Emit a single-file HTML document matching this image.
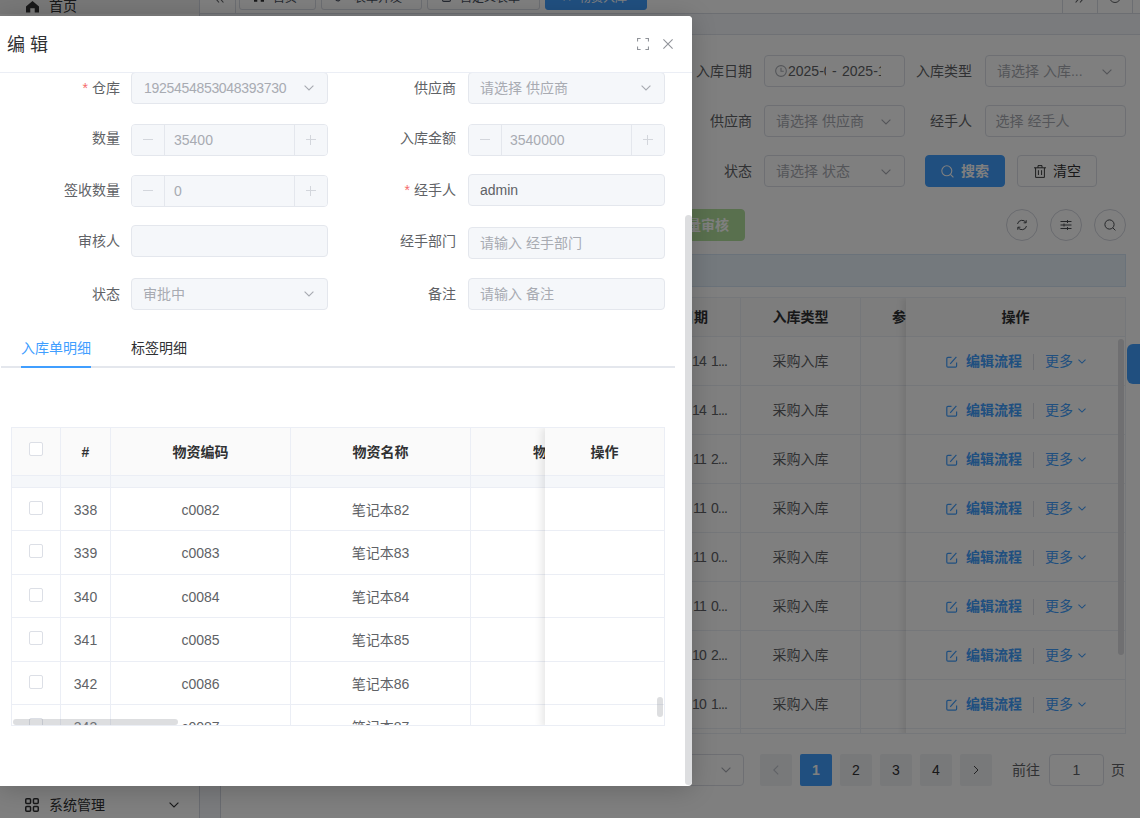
<!DOCTYPE html>
<html lang="zh-CN">
<head>
<meta charset="utf-8">
<title>编辑</title>
<style>
*{box-sizing:border-box;margin:0;padding:0}
html,body{width:1140px;height:818px;overflow:hidden}
body{position:relative;background:#f0f2f5;font-family:"Liberation Sans","Noto Sans CJK SC",sans-serif;font-size:14px;color:#606266}
.abs{position:absolute}
#app{position:absolute;left:0;top:0;width:1140px;height:818px;overflow:hidden;background:#f5f7fa}
#mask{position:absolute;left:0;top:0;width:1140px;height:818px;background:rgba(0,0,0,.5)}
/* sidebar */
#side{position:absolute;left:0;top:0;width:200px;height:818px;background:#fff;border-right:1px solid #d2d6e0}
#side .it{position:absolute;left:0;width:199px;height:40px;color:#303133;font-size:14px;line-height:40px}
#side .it span{position:absolute;left:49px;top:0;white-space:nowrap}
/* tagbar */
#tags{position:absolute;left:200px;top:0;width:940px;height:14px;background:#fff;border-bottom:1px solid #d8dce5;overflow:hidden}
.tag{position:absolute;top:-16px;height:26px;border:1px solid #d8dce5;border-radius:3px;background:#fff;color:#495060;font-size:12px;line-height:27px;text-align:left;white-space:nowrap}
.tag.on{background:#409eff;border-color:#409eff;color:#fff}
.vsep{position:absolute;top:0;width:1px;height:13px;background:#d8dce5}
/* card */
#card{position:absolute;left:220px;top:34px;width:940px;height:800px;background:#fff;border-top:1px solid #dfe3ea;border-left:1px solid #d2d6e0}
.flabel{position:absolute;height:32px;line-height:32px;color:#606266;font-size:14px;text-align:right;white-space:nowrap}
.inp{position:absolute;height:32px;border:1px solid #dcdfe6;border-radius:4px;background:#fff;font-size:14px;line-height:30px;color:#a8abb2;padding-left:11px;white-space:nowrap;overflow:hidden}
.chev{position:absolute;width:10px;height:6px}
.btn{position:absolute;height:32px;border-radius:4px;font-size:14px;line-height:30px;white-space:nowrap;font-weight:bold}
.circ{position:absolute;top:175px;width:32px;height:32px;border:1px solid #d3d6de;border-radius:50%;background:#fff}
.circ svg{position:absolute;left:9px;top:9px;width:12px;height:12px}
/* bg table */
#bt{position:absolute;left:0;top:263px;width:906px;height:436px;border:1px solid #ebeef5;overflow:hidden;background:#fff}
.bh{position:absolute;top:0;height:39px;background:#fafafa;border-bottom:1px solid #ebeef5;border-right:1px solid #ebeef5;color:#303133;font-weight:bold;text-align:center;line-height:39px;white-space:nowrap;overflow:hidden}
.bc{position:absolute;height:49px;border-bottom:1px solid #ebeef5;border-right:1px solid #ebeef5;text-align:center;line-height:48px;white-space:nowrap;overflow:hidden;color:#606266}
.lnk{color:#409eff}
.pg{position:absolute;top:720px;width:32px;height:32px;border-radius:2px;background:#f0f2f5;color:#303133;font-size:14px;text-align:center;line-height:33px}
.pg.on{background:#409eff;color:#fff;font-weight:bold}
/* modal */
#dlg{position:absolute;left:0;top:16px;width:692px;height:770px;background:#fff;border-radius:0 4px 4px 0;box-shadow:0 3px 26px rgba(0,0,0,.2);overflow:hidden}
#dh{position:absolute;left:0;top:0;width:692px;height:57px;border-bottom:1px solid #ebeef5;background:#fff;z-index:5}
#dh h3{position:absolute;left:7px;top:17px;font-size:18px;font-weight:normal;color:#303133;line-height:24px;white-space:nowrap}
#db{position:absolute;left:0;top:57px;width:692px;height:713px;overflow:hidden}
.ml{position:absolute;width:120px;height:32px;line-height:32px;text-align:right;color:#606266;font-size:14px;white-space:nowrap}
.ml i{color:#f56c6c;font-style:normal;margin-right:4px}
.mi{position:absolute;width:197px;height:32px;border:1px solid #e4e7ed;border-radius:4px;background:#f5f7fa;color:#a8abb2;font-size:14px;line-height:30px;padding-left:11px;white-space:nowrap;overflow:hidden}
.mi .seg{position:absolute;top:0;width:33px;height:30px;background:#f5f7fa;color:#d0d3d9}
.mi .seg.l{left:0;border-right:1px solid #e4e7ed}
.mi .seg.r{right:0;border-left:1px solid #e4e7ed}
.mi .seg b{position:absolute;left:11px;top:14px;width:10px;height:1px;background:#d3d6dc}
.mi .seg.r em{position:absolute;left:15px;top:10px;width:1px;height:10px;background:#d3d6dc}
/* inner table */
#mt{position:absolute;left:11px;top:411px;width:654px;height:299px;border:1px solid #ebeef5;overflow:hidden;background:#fff}
.th{position:absolute;top:0;z-index:2;height:48px;background:#fafafa;border-bottom:1px solid #ebeef5;border-right:1px solid #ebeef5;color:#303133;font-weight:bold;text-align:center;line-height:48px;white-space:nowrap;overflow:hidden;font-size:14px}
.td{position:absolute;height:43.5px;border-bottom:1px solid #ebeef5;border-right:1px solid #ebeef5;text-align:center;line-height:44px;white-space:nowrap;overflow:hidden;color:#606266;font-size:14px}
.cb{position:absolute;width:14px;height:14px;border:1px solid #dcdfe6;border-radius:2px;background:#fff}
.dr{position:absolute;top:0;height:30px;overflow:hidden;white-space:nowrap;color:#606266}
</style>
</head>
<body>
<div id="app">
  <div id="side">
    <div class="it" style="top:-26px;background:#f0f0f0">
      <svg class="abs" style="left:26px;top:27.3px" width="13" height="11.5" viewBox="0 0 14 13" preserveAspectRatio="none"><path d="M7 0 L0 6.2 V13 H4.6 V8.2 H9.4 V13 H14 V6.2 Z" fill="#303133"/></svg>
      <span style="top:12px">首页</span>
    </div>
    <div class="it" style="top:785px">
      <svg class="abs" style="left:25px;top:13px" width="14" height="14" viewBox="0 0 14 14" fill="none" stroke="#303133" stroke-width="1.5"><rect x=".75" y=".75" width="4.8" height="4.8" rx="1"/><rect x="8.45" y=".75" width="4.8" height="4.8" rx="1"/><rect x=".75" y="8.45" width="4.8" height="4.8" rx="1"/><rect x="8.45" y="8.45" width="4.8" height="4.8" rx="1"/></svg>
      <span>系统管理</span>
      <svg class="abs" style="left:169px;top:17px" width="10" height="6" viewBox="0 0 10 6" fill="none" stroke="#303133" stroke-width="1.1"><path d="M.6 .6 L5 5 L9.4 .6"/></svg>
    </div>
  </div>
  <div id="tags">
    <svg class="abs" style="left:15px;top:-6px" width="9" height="9" viewBox="0 0 9 9" fill="none" stroke="#606266" stroke-width="1.1"><path d="M4 .5 L.6 4.5 L4 8.5 M8.4 .5 L5 4.5 L8.4 8.5"/></svg>
    <div class="vsep" style="left:35px"></div>
    <div class="tag" style="left:39px;width:77px;padding-left:33px"><svg class="abs" style="left:14px;top:7px" width="10" height="10" viewBox="0 0 14 13"><path d="M7 0 L0 6.2 V13 H4.6 V8.2 H9.4 V13 H14 V6.2 Z" fill="#303133"/></svg>首页</div>
    <div class="tag" style="left:121px;width:101px;padding-left:32px"><svg class="abs" style="left:13px;top:7px" width="10" height="10" viewBox="0 0 10 10" fill="none" stroke="#495060" stroke-width="1.2"><path d="M3.5 3 L.8 5.6 Q.2 9 3.6 9 L6 6.8 M6.5 7 L9.2 4.4 Q9.8 1 6.4 1 L4 3.2"/></svg>表单开发</div>
    <div class="tag" style="left:227px;width:113px;padding-left:32px"><svg class="abs" style="left:14px;top:7px" width="9" height="10" viewBox="0 0 9 10" fill="none" stroke="#495060" stroke-width="1.2"><rect x=".6" y="1.6" width="7.8" height="7.8" rx="1.2"/><path d="M2.5 .2 V2.6 M6.5 .2 V2.6"/></svg>自定义表单</div>
    <div class="tag on" style="left:345px;width:102px;padding-left:33px"><svg class="abs" style="left:17px;top:7px" width="8" height="9" viewBox="0 0 8 9" fill="#fff"><circle cx="1.2" cy="1.2" r="1"/><circle cx="6.8" cy="1.2" r="1"/><circle cx="1.2" cy="7.6" r=".9"/><circle cx="6.8" cy="7.6" r=".9"/></svg>物资入库</div>
    <div class="vsep" style="left:862px"></div>
    <svg class="abs" style="left:875px;top:-6px" width="9" height="9" viewBox="0 0 9 9" fill="none" stroke="#606266" stroke-width="1.1"><path d="M.6 .5 L4 4.5 L.6 8.5 M5 .5 L8.4 4.5 L5 8.5"/></svg>
    <div class="vsep" style="left:897px"></div>
    <div class="abs" style="left:909px;top:-9px;width:12px;height:12px;border:1.2px solid #606266;border-radius:50%"></div>
    <div class="vsep" style="left:932px"></div>
  </div>
  <div id="card">
<div class="flabel" style="left:431px;top:20px;width:100px">入库日期</div>
<div class="inp" style="left:543px;top:20px;width:141px;color:#606266;padding-left:10px"><svg class="abs" style="left:10px;top:9px" width="12" height="12" viewBox="0 0 11 11" fill="none" stroke="#a8abb2" stroke-width="1"><circle cx="5.5" cy="5.5" r="4.9"/><path d="M5.5 2.6 V5.8 H8"/></svg><span class="dr" style="left:23px;width:38px">2025-07-01</span><span class="abs" style="left:67px;top:0">-</span><span class="dr" style="left:77px;width:38.5px">2025-12-31</span></div>
<div class="flabel" style="left:651px;top:20px;width:100px">入库类型</div>
<div class="inp" style="left:764px;top:20px;width:141px">请选择 入库...<svg class="abs" style="left:116px;top:12.5px" width="10" height="6" viewBox="0 0 10 6" fill="none" stroke="#a8abb2" stroke-width="1.1"><path d="M.6 .6 L5 5 L9.4 .6"/></svg></div>
<div class="flabel" style="left:431px;top:70px;width:100px">供应商</div>
<div class="inp" style="left:543px;top:70px;width:141px">请选择 供应商<svg class="abs" style="left:116px;top:12.5px" width="10" height="6" viewBox="0 0 10 6" fill="none" stroke="#a8abb2" stroke-width="1.1"><path d="M.6 .6 L5 5 L9.4 .6"/></svg></div>
<div class="flabel" style="left:651px;top:70px;width:100px">经手人</div>
<div class="inp" style="left:764px;top:70px;width:141px;padding-left:9.5px">选择 经手人</div>
<div class="flabel" style="left:431px;top:120px;width:100px">状态</div>
<div class="inp" style="left:543px;top:120px;width:141px">请选择 状态<svg class="abs" style="left:116px;top:12.5px" width="10" height="6" viewBox="0 0 10 6" fill="none" stroke="#a8abb2" stroke-width="1.1"><path d="M.6 .6 L5 5 L9.4 .6"/></svg></div>
<div class="btn" style="left:704px;top:120px;width:80px;background:#409eff;border:1px solid #409eff;color:#fff;padding-left:35px"><svg class="abs" style="left:15px;top:9px" width="13" height="13" viewBox="0 0 13 13" fill="none" stroke="#fff" stroke-width="1.1"><circle cx="5.8" cy="5.8" r="5"/><path d="M9.4 9.4 L12.4 12.4"/></svg>搜索</div>
<div class="btn" style="left:796px;top:120px;width:80px;background:#fff;border:1px solid #dcdfe6;color:#303133;padding-left:35px;font-weight:normal"><svg class="abs" style="left:16px;top:9px" width="12" height="13" viewBox="0 0 12 13" fill="none" stroke="#303133" stroke-width=".95"><path d="M0 2.8 H12 M4 2.8 V.6 H8 V2.8 M1.6 2.8 V12.4 H10.4 V2.8 M4.4 5.2 V10 M7.6 5.2 V10"/></svg>清空</div>
<div class="btn" style="left:404px;top:174px;width:120px;background:#b3e19d;border:1px solid #b3e19d;color:#fff;text-align:right;padding-right:15px">批量审核</div>
<div class="circ" style="left:785px;top:174px"><svg viewBox="0 0 12 12" fill="none" stroke="#4a4d52" stroke-width="1"><path d="M1.5 5 A4.6 4.6 0 0 1 10 3.6 M10.2 1.2 V3.8 H7.6 M10.5 7 A4.6 4.6 0 0 1 2 8.4 M1.8 10.8 V8.2 H4.4"/></svg></div>
<div class="circ" style="left:829px;top:174px"><svg viewBox="0 0 12 12" fill="none" stroke="#4a4d52" stroke-width="1"><path d="M0.5 2.5 H11.5 M0.5 6 H11.5 M0.5 9.5 H11.5 M7.5 1 V4 M4 4.5 V7.5 M7.5 8 V11"/></svg></div>
<div class="circ" style="left:873px;top:174px"><svg viewBox="0 0 12 12" fill="none" stroke="#4a4d52" stroke-width="1"><circle cx="5.5" cy="5.5" r="4.6"/><path d="M8.8 8.8 L11.4 11.4"/></svg></div>
<div class="abs" style="left:379px;top:219px;width:526px;height:33px;background:#e9f2fb;border:1px solid #d4e4f5"></div>
<div id="bt" style="left:379px;top:262px;width:526px;height:437px">
<div class="bh" style="left:0px;width:140px;text-align:right;padding-right:32px;">入库日期</div>
<div class="bh" style="left:140px;width:120px;">入库类型</div>
<div class="bh" style="left:260px;width:120px;text-align:left;padding-left:31px;">参考单号</div>
<div class="bc" style="left:0px;top:39px;width:140px;text-align:right;padding-right:13px;letter-spacing:-.85px;word-spacing:2px"><span style="margin-right:2px">2025-07-</span>14 1...</div>
<div class="bc" style="left:140px;top:39px;width:120px">采购入库</div>
<div class="bc" style="left:260px;top:39px;width:120px"></div>
<div class="bc" style="left:0px;top:88px;width:140px;text-align:right;padding-right:13px;letter-spacing:-.85px;word-spacing:2px"><span style="margin-right:2px">2025-07-</span>14 1...</div>
<div class="bc" style="left:140px;top:88px;width:120px">采购入库</div>
<div class="bc" style="left:260px;top:88px;width:120px"></div>
<div class="bc" style="left:0px;top:137px;width:140px;text-align:right;padding-right:13px;letter-spacing:-.85px;word-spacing:2px"><span style="margin-right:2px">2025-07-</span>11 2...</div>
<div class="bc" style="left:140px;top:137px;width:120px">采购入库</div>
<div class="bc" style="left:260px;top:137px;width:120px"></div>
<div class="bc" style="left:0px;top:186px;width:140px;text-align:right;padding-right:13px;letter-spacing:-.85px;word-spacing:2px"><span style="margin-right:2px">2025-07-</span>11 0...</div>
<div class="bc" style="left:140px;top:186px;width:120px">采购入库</div>
<div class="bc" style="left:260px;top:186px;width:120px"></div>
<div class="bc" style="left:0px;top:235px;width:140px;text-align:right;padding-right:13px;letter-spacing:-.85px;word-spacing:2px"><span style="margin-right:2px">2025-07-</span>11 0...</div>
<div class="bc" style="left:140px;top:235px;width:120px">采购入库</div>
<div class="bc" style="left:260px;top:235px;width:120px"></div>
<div class="bc" style="left:0px;top:284px;width:140px;text-align:right;padding-right:13px;letter-spacing:-.85px;word-spacing:2px"><span style="margin-right:2px">2025-07-</span>11 0...</div>
<div class="bc" style="left:140px;top:284px;width:120px">采购入库</div>
<div class="bc" style="left:260px;top:284px;width:120px"></div>
<div class="bc" style="left:0px;top:333px;width:140px;text-align:right;padding-right:13px;letter-spacing:-.85px;word-spacing:2px"><span style="margin-right:2px">2025-07-</span>10 2...</div>
<div class="bc" style="left:140px;top:333px;width:120px">采购入库</div>
<div class="bc" style="left:260px;top:333px;width:120px"></div>
<div class="bc" style="left:0px;top:382px;width:140px;text-align:right;padding-right:13px;letter-spacing:-.85px;word-spacing:2px"><span style="margin-right:2px">2025-07-</span>10 1...</div>
<div class="bc" style="left:140px;top:382px;width:120px">采购入库</div>
<div class="bc" style="left:260px;top:382px;width:120px"></div>
<div class="bc" style="left:0px;top:431px;width:140px;text-align:right;padding-right:13px;letter-spacing:-.85px;word-spacing:2px"><span style="margin-right:2px">2025-07-</span>10 1...</div>
<div class="bc" style="left:140px;top:431px;width:120px">采购入库</div>
<div class="bc" style="left:260px;top:431px;width:120px"></div>
<div class="abs" style="left:305px;top:0;width:219px;height:440px;background:#fff;box-shadow:-2px 0 8px rgba(0,0,0,.12)">
<div class="bh" style="left:0;width:219px;border-right:0">操作</div>
<div class="bc" style="left:0;top:39px;width:219px;border-right:0"><svg class="abs" style="left:40px;top:19px" width="12" height="12" viewBox="0 0 12 12" fill="none" stroke="#409eff" stroke-width="1.2"><path d="M5.5 1.4 H2 Q.8 1.4 .8 2.6 V10 Q.8 11.2 2 11.2 H9.4 Q10.6 11.2 10.6 10 V6.5 M4.2 7.8 L10.4 .9"/></svg><span class="abs lnk" style="left:60px;top:0;font-weight:bold">编辑流程</span><span class="abs" style="left:127px;top:17px;width:1px;height:16px;background:#dcdfe6"></span><span class="abs lnk" style="left:139px;top:0">更多</span><svg class="abs" style="left:172px;top:22px" width="8" height="5" viewBox="0 0 10 6" fill="none" stroke="#409eff" stroke-width="1.3"><path d="M.6 .6 L5 5 L9.4 .6"/></svg></div>
<div class="bc" style="left:0;top:88px;width:219px;border-right:0"><svg class="abs" style="left:40px;top:19px" width="12" height="12" viewBox="0 0 12 12" fill="none" stroke="#409eff" stroke-width="1.2"><path d="M5.5 1.4 H2 Q.8 1.4 .8 2.6 V10 Q.8 11.2 2 11.2 H9.4 Q10.6 11.2 10.6 10 V6.5 M4.2 7.8 L10.4 .9"/></svg><span class="abs lnk" style="left:60px;top:0;font-weight:bold">编辑流程</span><span class="abs" style="left:127px;top:17px;width:1px;height:16px;background:#dcdfe6"></span><span class="abs lnk" style="left:139px;top:0">更多</span><svg class="abs" style="left:172px;top:22px" width="8" height="5" viewBox="0 0 10 6" fill="none" stroke="#409eff" stroke-width="1.3"><path d="M.6 .6 L5 5 L9.4 .6"/></svg></div>
<div class="bc" style="left:0;top:137px;width:219px;border-right:0"><svg class="abs" style="left:40px;top:19px" width="12" height="12" viewBox="0 0 12 12" fill="none" stroke="#409eff" stroke-width="1.2"><path d="M5.5 1.4 H2 Q.8 1.4 .8 2.6 V10 Q.8 11.2 2 11.2 H9.4 Q10.6 11.2 10.6 10 V6.5 M4.2 7.8 L10.4 .9"/></svg><span class="abs lnk" style="left:60px;top:0;font-weight:bold">编辑流程</span><span class="abs" style="left:127px;top:17px;width:1px;height:16px;background:#dcdfe6"></span><span class="abs lnk" style="left:139px;top:0">更多</span><svg class="abs" style="left:172px;top:22px" width="8" height="5" viewBox="0 0 10 6" fill="none" stroke="#409eff" stroke-width="1.3"><path d="M.6 .6 L5 5 L9.4 .6"/></svg></div>
<div class="bc" style="left:0;top:186px;width:219px;border-right:0"><svg class="abs" style="left:40px;top:19px" width="12" height="12" viewBox="0 0 12 12" fill="none" stroke="#409eff" stroke-width="1.2"><path d="M5.5 1.4 H2 Q.8 1.4 .8 2.6 V10 Q.8 11.2 2 11.2 H9.4 Q10.6 11.2 10.6 10 V6.5 M4.2 7.8 L10.4 .9"/></svg><span class="abs lnk" style="left:60px;top:0;font-weight:bold">编辑流程</span><span class="abs" style="left:127px;top:17px;width:1px;height:16px;background:#dcdfe6"></span><span class="abs lnk" style="left:139px;top:0">更多</span><svg class="abs" style="left:172px;top:22px" width="8" height="5" viewBox="0 0 10 6" fill="none" stroke="#409eff" stroke-width="1.3"><path d="M.6 .6 L5 5 L9.4 .6"/></svg></div>
<div class="bc" style="left:0;top:235px;width:219px;border-right:0"><svg class="abs" style="left:40px;top:19px" width="12" height="12" viewBox="0 0 12 12" fill="none" stroke="#409eff" stroke-width="1.2"><path d="M5.5 1.4 H2 Q.8 1.4 .8 2.6 V10 Q.8 11.2 2 11.2 H9.4 Q10.6 11.2 10.6 10 V6.5 M4.2 7.8 L10.4 .9"/></svg><span class="abs lnk" style="left:60px;top:0;font-weight:bold">编辑流程</span><span class="abs" style="left:127px;top:17px;width:1px;height:16px;background:#dcdfe6"></span><span class="abs lnk" style="left:139px;top:0">更多</span><svg class="abs" style="left:172px;top:22px" width="8" height="5" viewBox="0 0 10 6" fill="none" stroke="#409eff" stroke-width="1.3"><path d="M.6 .6 L5 5 L9.4 .6"/></svg></div>
<div class="bc" style="left:0;top:284px;width:219px;border-right:0"><svg class="abs" style="left:40px;top:19px" width="12" height="12" viewBox="0 0 12 12" fill="none" stroke="#409eff" stroke-width="1.2"><path d="M5.5 1.4 H2 Q.8 1.4 .8 2.6 V10 Q.8 11.2 2 11.2 H9.4 Q10.6 11.2 10.6 10 V6.5 M4.2 7.8 L10.4 .9"/></svg><span class="abs lnk" style="left:60px;top:0;font-weight:bold">编辑流程</span><span class="abs" style="left:127px;top:17px;width:1px;height:16px;background:#dcdfe6"></span><span class="abs lnk" style="left:139px;top:0">更多</span><svg class="abs" style="left:172px;top:22px" width="8" height="5" viewBox="0 0 10 6" fill="none" stroke="#409eff" stroke-width="1.3"><path d="M.6 .6 L5 5 L9.4 .6"/></svg></div>
<div class="bc" style="left:0;top:333px;width:219px;border-right:0"><svg class="abs" style="left:40px;top:19px" width="12" height="12" viewBox="0 0 12 12" fill="none" stroke="#409eff" stroke-width="1.2"><path d="M5.5 1.4 H2 Q.8 1.4 .8 2.6 V10 Q.8 11.2 2 11.2 H9.4 Q10.6 11.2 10.6 10 V6.5 M4.2 7.8 L10.4 .9"/></svg><span class="abs lnk" style="left:60px;top:0;font-weight:bold">编辑流程</span><span class="abs" style="left:127px;top:17px;width:1px;height:16px;background:#dcdfe6"></span><span class="abs lnk" style="left:139px;top:0">更多</span><svg class="abs" style="left:172px;top:22px" width="8" height="5" viewBox="0 0 10 6" fill="none" stroke="#409eff" stroke-width="1.3"><path d="M.6 .6 L5 5 L9.4 .6"/></svg></div>
<div class="bc" style="left:0;top:382px;width:219px;border-right:0"><svg class="abs" style="left:40px;top:19px" width="12" height="12" viewBox="0 0 12 12" fill="none" stroke="#409eff" stroke-width="1.2"><path d="M5.5 1.4 H2 Q.8 1.4 .8 2.6 V10 Q.8 11.2 2 11.2 H9.4 Q10.6 11.2 10.6 10 V6.5 M4.2 7.8 L10.4 .9"/></svg><span class="abs lnk" style="left:60px;top:0;font-weight:bold">编辑流程</span><span class="abs" style="left:127px;top:17px;width:1px;height:16px;background:#dcdfe6"></span><span class="abs lnk" style="left:139px;top:0">更多</span><svg class="abs" style="left:172px;top:22px" width="8" height="5" viewBox="0 0 10 6" fill="none" stroke="#409eff" stroke-width="1.3"><path d="M.6 .6 L5 5 L9.4 .6"/></svg></div>
<div class="bc" style="left:0;top:431px;width:219px;border-right:0"><svg class="abs" style="left:40px;top:19px" width="12" height="12" viewBox="0 0 12 12" fill="none" stroke="#409eff" stroke-width="1.2"><path d="M5.5 1.4 H2 Q.8 1.4 .8 2.6 V10 Q.8 11.2 2 11.2 H9.4 Q10.6 11.2 10.6 10 V6.5 M4.2 7.8 L10.4 .9"/></svg><span class="abs lnk" style="left:60px;top:0;font-weight:bold">编辑流程</span><span class="abs" style="left:127px;top:17px;width:1px;height:16px;background:#dcdfe6"></span><span class="abs lnk" style="left:139px;top:0">更多</span><svg class="abs" style="left:172px;top:22px" width="8" height="5" viewBox="0 0 10 6" fill="none" stroke="#409eff" stroke-width="1.3"><path d="M.6 .6 L5 5 L9.4 .6"/></svg></div>
</div>
<div class="abs" style="left:517px;top:41px;width:6px;height:316px;border-radius:3px;background:#dedfe2"></div>
</div>
<div class="inp" style="left:423px;top:719px;width:100px"><svg class="abs" style="left:76px;top:12px" width="10" height="6" viewBox="0 0 10 6" fill="none" stroke="#a8abb2" stroke-width="1.1"><path d="M.6 .6 L5 5 L9.4 .6"/></svg></div>
<div class="pg dis" style="left:539px;top:719px"><svg class="abs" style="left:13px;top:11px" width="6" height="10" viewBox="0 0 6 10" fill="none" stroke="#c0c4cc" stroke-width="1.1"><path d="M5.2 .6 L.8 5 L5.2 9.4"/></svg></div>
<div class="pg on" style="left:579px;top:719px">1</div>
<div class="pg" style="left:619px;top:719px">2</div>
<div class="pg" style="left:659px;top:719px">3</div>
<div class="pg" style="left:699px;top:719px">4</div>
<div class="pg" style="left:739px;top:719px"><svg class="abs" style="left:13px;top:11px" width="6" height="10" viewBox="0 0 6 10" fill="none" stroke="#303133" stroke-width=".9"><path d="M1 1 L5 5 L1 9"/></svg></div>
<div class="abs" style="left:791px;top:719px;line-height:32px;font-size:14px;color:#606266">前往</div>
<div class="inp" style="left:828px;top:719px;width:55px;padding:0;text-align:center;color:#606266">1</div>
<div class="abs" style="left:890px;top:719px;line-height:32px;font-size:14px;color:#606266">页</div>
  </div>
  <div class="abs" style="left:1127px;top:344px;width:20px;height:40px;background:#409eff;border-radius:6px"></div>
</div>
<div id="mask"></div>
<div id="dlg">
<div id="db">
<div class="ml" style="left:0px;top:-1.5px"><i>*</i>仓库</div>
<div class="mi" style="left:131px;top:-1px;color:#a8abb2"><span style="letter-spacing:-.3px;margin-left:1px">1925454853048393730</span><svg class="abs" style="left:172px;top:12px" width="10" height="6" viewBox="0 0 10 6" fill="none" stroke="#a8abb2" stroke-width="1.1"><path d="M.6 .6 L5 5 L9.4 .6"/></svg></div>
<div class="ml" style="left:0px;top:49px">数量</div>
<div class="mi" style="left:131px;top:51px;padding-left:42px"><span class="seg l"><b></b></span>35400<span class="seg r"><b></b><em></em></span></div>
<div class="ml" style="left:0px;top:101px">签收数量</div>
<div class="mi" style="left:131px;top:102px;padding-left:42px"><span class="seg l"><b></b></span>0<span class="seg r"><b></b><em></em></span></div>
<div class="ml" style="left:0px;top:152.3px">审核人</div>
<div class="mi" style="left:131px;top:152px;color:#a8abb2"></div>
<div class="ml" style="left:0px;top:204.5px">状态</div>
<div class="mi" style="left:131px;top:205px;color:#a8abb2">审批中<svg class="abs" style="left:172px;top:12px" width="10" height="6" viewBox="0 0 10 6" fill="none" stroke="#a8abb2" stroke-width="1.1"><path d="M.6 .6 L5 5 L9.4 .6"/></svg></div>
<div class="ml" style="left:336px;top:-1.5px">供应商</div>
<div class="mi" style="left:468px;top:-1px;color:#a8abb2">请选择 供应商<svg class="abs" style="left:172px;top:12px" width="10" height="6" viewBox="0 0 10 6" fill="none" stroke="#a8abb2" stroke-width="1.1"><path d="M.6 .6 L5 5 L9.4 .6"/></svg></div>
<div class="ml" style="left:336px;top:49px">入库金额</div>
<div class="mi" style="left:468px;top:51px;padding-left:41px"><span class="seg l"><b></b></span>3540000<span class="seg r"><b></b><em></em></span></div>
<div class="ml" style="left:336px;top:101px"><i>*</i>经手人</div>
<div class="mi" style="left:468px;top:101px;color:#606266">admin</div>
<div class="ml" style="left:336px;top:152.3px">经手部门</div>
<div class="mi" style="left:468px;top:154px;color:#a8abb2">请输入 经手部门</div>
<div class="ml" style="left:336px;top:204.5px">备注</div>
<div class="mi" style="left:468px;top:205px;color:#a8abb2">请输入 备注</div>
<div class="abs" style="left:1px;top:293px;width:674px;height:2px;background:#e4e7ed"></div>
<div class="abs" style="left:21px;top:293px;width:70px;height:2px;background:#409eff"></div>
<div class="abs" style="left:21px;top:255px;line-height:40px;font-size:14px;color:#409eff;white-space:nowrap">入库单明细</div>
<div class="abs" style="left:131px;top:255px;line-height:40px;font-size:14px;color:#303133;white-space:nowrap">标签明细</div>
<div id="mt" style="left:11px;top:354px;width:654px;height:299px">
<div class="th" style="left:0px;width:49px;"></div>
<div class="th" style="left:49px;width:50px;">#</div>
<div class="th" style="left:99px;width:180px;">物资编码</div>
<div class="th" style="left:279px;width:180px;">物资名称</div>
<div class="th" style="left:459px;width:180px;text-align:left;padding-left:62px;">物资规格</div>
<div class="cb" style="left:17px;top:14px;z-index:3"></div>
<div class="td" style="left:0px;top:16.0px;width:49px;background:#f5f7fa;"></div>
<div class="td" style="left:49px;top:16.0px;width:50px;background:#f5f7fa;">337</div>
<div class="td" style="left:99px;top:16.0px;width:180px;background:#f5f7fa;">c0081</div>
<div class="td" style="left:279px;top:16.0px;width:180px;background:#f5f7fa;">笔记本81</div>
<div class="td" style="left:459px;top:16.0px;width:180px;background:#f5f7fa;"></div>
<div class="cb" style="left:17px;top:29.0px"></div>
<div class="td" style="left:0px;top:59.5px;width:49px;"></div>
<div class="td" style="left:49px;top:59.5px;width:50px;">338</div>
<div class="td" style="left:99px;top:59.5px;width:180px;">c0082</div>
<div class="td" style="left:279px;top:59.5px;width:180px;">笔记本82</div>
<div class="td" style="left:459px;top:59.5px;width:180px;"></div>
<div class="cb" style="left:17px;top:72.5px"></div>
<div class="td" style="left:0px;top:103.0px;width:49px;"></div>
<div class="td" style="left:49px;top:103.0px;width:50px;">339</div>
<div class="td" style="left:99px;top:103.0px;width:180px;">c0083</div>
<div class="td" style="left:279px;top:103.0px;width:180px;">笔记本83</div>
<div class="td" style="left:459px;top:103.0px;width:180px;"></div>
<div class="cb" style="left:17px;top:116.0px"></div>
<div class="td" style="left:0px;top:146.5px;width:49px;"></div>
<div class="td" style="left:49px;top:146.5px;width:50px;">340</div>
<div class="td" style="left:99px;top:146.5px;width:180px;">c0084</div>
<div class="td" style="left:279px;top:146.5px;width:180px;">笔记本84</div>
<div class="td" style="left:459px;top:146.5px;width:180px;"></div>
<div class="cb" style="left:17px;top:159.5px"></div>
<div class="td" style="left:0px;top:190.0px;width:49px;"></div>
<div class="td" style="left:49px;top:190.0px;width:50px;">341</div>
<div class="td" style="left:99px;top:190.0px;width:180px;">c0085</div>
<div class="td" style="left:279px;top:190.0px;width:180px;">笔记本85</div>
<div class="td" style="left:459px;top:190.0px;width:180px;"></div>
<div class="cb" style="left:17px;top:203.0px"></div>
<div class="td" style="left:0px;top:233.5px;width:49px;"></div>
<div class="td" style="left:49px;top:233.5px;width:50px;">342</div>
<div class="td" style="left:99px;top:233.5px;width:180px;">c0086</div>
<div class="td" style="left:279px;top:233.5px;width:180px;">笔记本86</div>
<div class="td" style="left:459px;top:233.5px;width:180px;"></div>
<div class="cb" style="left:17px;top:246.5px"></div>
<div class="td" style="left:0px;top:277.0px;width:49px;"></div>
<div class="td" style="left:49px;top:277.0px;width:50px;">343</div>
<div class="td" style="left:99px;top:277.0px;width:180px;">c0087</div>
<div class="td" style="left:279px;top:277.0px;width:180px;">笔记本87</div>
<div class="td" style="left:459px;top:277.0px;width:180px;"></div>
<div class="cb" style="left:17px;top:290.0px"></div>
<div class="td" style="left:0px;top:320.5px;width:49px;"></div>
<div class="td" style="left:49px;top:320.5px;width:50px;">344</div>
<div class="td" style="left:99px;top:320.5px;width:180px;">c0088</div>
<div class="td" style="left:279px;top:320.5px;width:180px;">笔记本88</div>
<div class="td" style="left:459px;top:320.5px;width:180px;"></div>
<div class="cb" style="left:17px;top:333.5px"></div>
<div class="abs" style="left:533px;top:0;width:119px;height:300px;background:#fff;box-shadow:-3px 0 8px rgba(0,0,0,.10);z-index:3">
<div class="th" style="left:0;width:119px;border-right:0">操作</div>
<div class="td" style="left:0;top:16.0px;width:119px;border-right:0;background:#f5f7fa;"></div>
<div class="td" style="left:0;top:59.5px;width:119px;border-right:0;"></div>
<div class="td" style="left:0;top:103.0px;width:119px;border-right:0;"></div>
<div class="td" style="left:0;top:146.5px;width:119px;border-right:0;"></div>
<div class="td" style="left:0;top:190.0px;width:119px;border-right:0;"></div>
<div class="td" style="left:0;top:233.5px;width:119px;border-right:0;"></div>
<div class="td" style="left:0;top:277.0px;width:119px;border-right:0;"></div>
<div class="td" style="left:0;top:320.5px;width:119px;border-right:0;"></div>
</div>
<div class="abs" style="left:1px;top:291px;width:165px;height:6px;border-radius:3px;background:rgba(144,147,153,.3);z-index:4"></div>
<div class="abs" style="left:645px;top:269px;width:6px;height:20px;border-radius:3px;background:rgba(144,147,153,.3);z-index:4"></div>
</div>
</div>
<div id="dh"><h3>编 辑</h3>
<svg class="abs" style="left:637px;top:22px" width="12" height="12" viewBox="0 0 12 12" fill="none" stroke="#909399" stroke-width="1.1"><path d="M.55 3.6 V.55 H3.6 M8.4 .55 H11.45 V3.6 M11.45 8.4 V11.45 H8.4 M3.6 11.45 H.55 V8.4"/></svg>
<svg class="abs" style="left:663px;top:23px" width="10" height="10" viewBox="0 0 10 10" fill="none" stroke="#909399" stroke-width="1.1"><path d="M.4 .4 L9.6 9.6 M9.6 .4 L.4 9.6"/></svg>
</div>
<div class="abs" style="left:685px;top:199px;width:7px;height:570px;border-radius:4px;background:#dddee0;z-index:6"></div>
</div>
</body>
</html>
